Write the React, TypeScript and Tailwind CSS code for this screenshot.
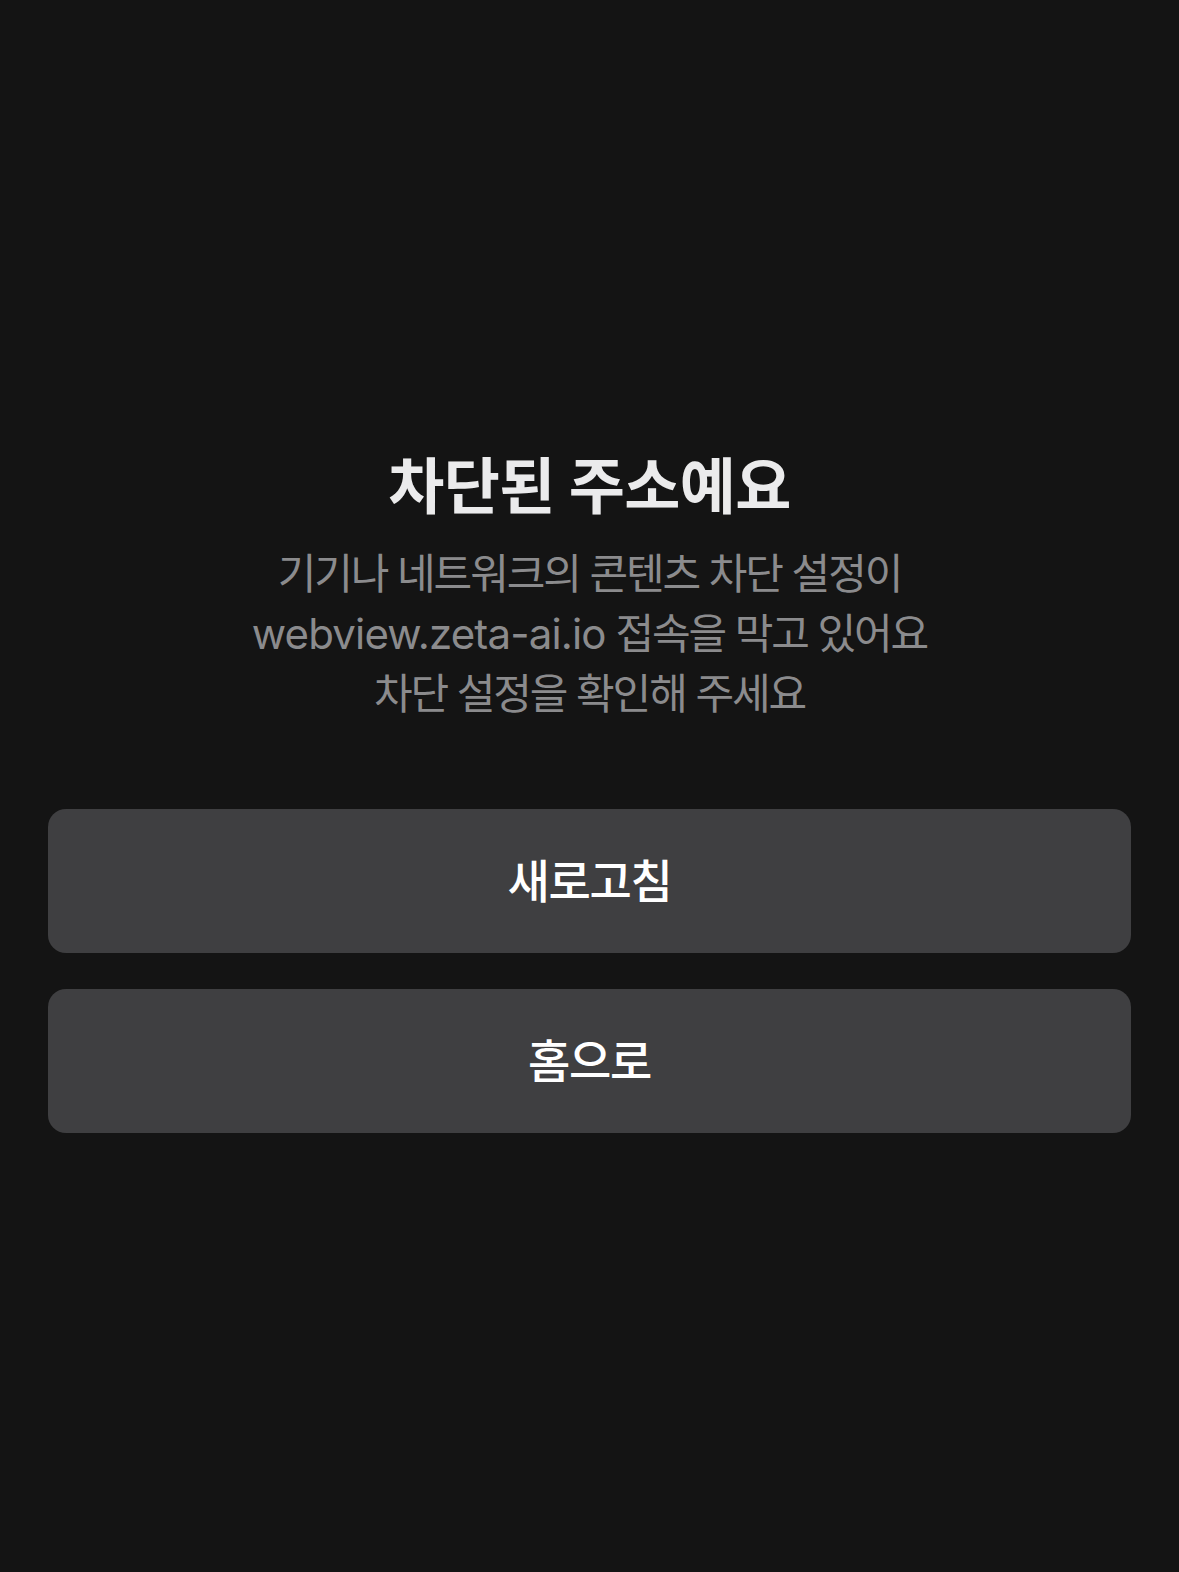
export default function App() {
  const font = { fontFamily: 'Inter, "Noto Sans CJK KR", "Noto Sans", sans-serif' };
  return (
    <div
      className="min-h-screen w-full bg-[#141414] flex flex-col justify-center px-[48px] pt-[9px]"
      style={font}
    >
      <div className="flex flex-col items-center text-center">
        <h1 className="text-[61px] leading-[78px] font-bold text-[#ebebec] tracking-[-0.01em]">
          차단된 주소예요
        </h1>
        <p className="mt-[18px] text-[42px] leading-[60px] text-[#8b8b8d] tracking-[-0.05em]">
          기기나 네트워크의 콘텐츠 차단 설정이
          <br />
          <span className="tracking-[-0.02em]">webview.zeta-ai.io</span> 접속을 막고 있어요
          <br />
          차단 설정을 확인해 주세요
        </p>
      </div>
      <div className="mt-[85px] flex flex-col gap-[36px]">
        <button className="h-[144px] w-full rounded-[18px] bg-[#3f3f41] text-[46px] font-medium text-white tracking-[-0.03em]">
          새로고침
        </button>
        <button className="h-[144px] w-full rounded-[18px] bg-[#3f3f41] text-[46px] font-medium text-white tracking-[-0.03em]">
          홈으로
        </button>
      </div>
    </div>
  );
}
